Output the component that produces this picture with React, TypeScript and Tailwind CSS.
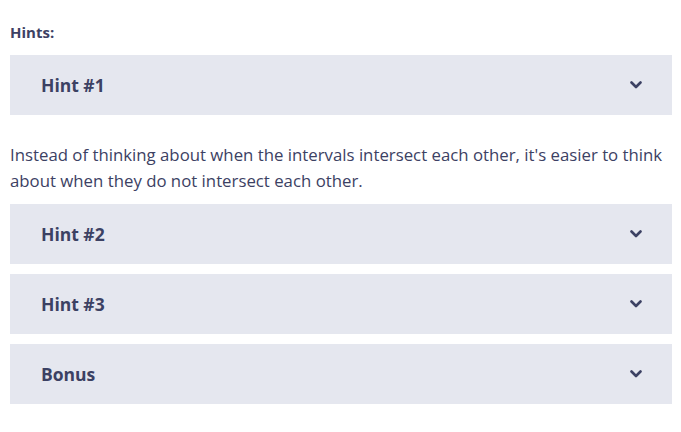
import React, { useState } from 'react';

const hints = [
    { id: 1, title: 'Hint #1' },
    { id: 2, title: 'Hint #2' },
    { id: 3, title: 'Hint #3' },
    { id: 4, title: 'Bonus' },
];

function Chevron() {
    return (
        <svg width="12" height="8" viewBox="0 0 12 8" fill="none">
            <path d="M1.5 1.5L6 6L10.5 1.5" stroke="#3c4163" strokeWidth="2.6" strokeLinecap="round" strokeLinejoin="round" />
        </svg>
    );
}

export default function App() {
    const [open, setOpen] = useState<number | null>(null);

    return (
        <div className="min-h-[432px] bg-white pl-[10px] pr-[9px] pt-[22px] text-[#3c4163]" style={{ fontFamily: '"Open Sans", "Noto Sans", sans-serif' }}>
            <div className="text-[15px] font-bold leading-[20px] mb-[13px]">Hints:</div>

            <div className="flex flex-col">
                {hints.map(hint => (
                    <div key={hint.id} className={hint.id === 1 ? '' : 'mt-[10px]'}>
                        <button
                            onClick={() => setOpen(open === hint.id ? null : hint.id)}
                            className="w-full h-[60px] bg-[#e5e7ef] flex items-center justify-between pl-[31px] pr-[30px] text-left"
                        >
                            <span className="text-[17.5px] font-bold">{hint.title}</span>
                            <Chevron />
                        </button>
                        {hint.id === 1 && (
                            <p className="text-[16.8px] leading-[26px] pt-[27px]">
                                Instead of thinking about when the intervals intersect each other, it's easier to think
                                about when they do not intersect each other.
                            </p>
                        )}
                    </div>
                ))}
            </div>
        </div>
    );
}
